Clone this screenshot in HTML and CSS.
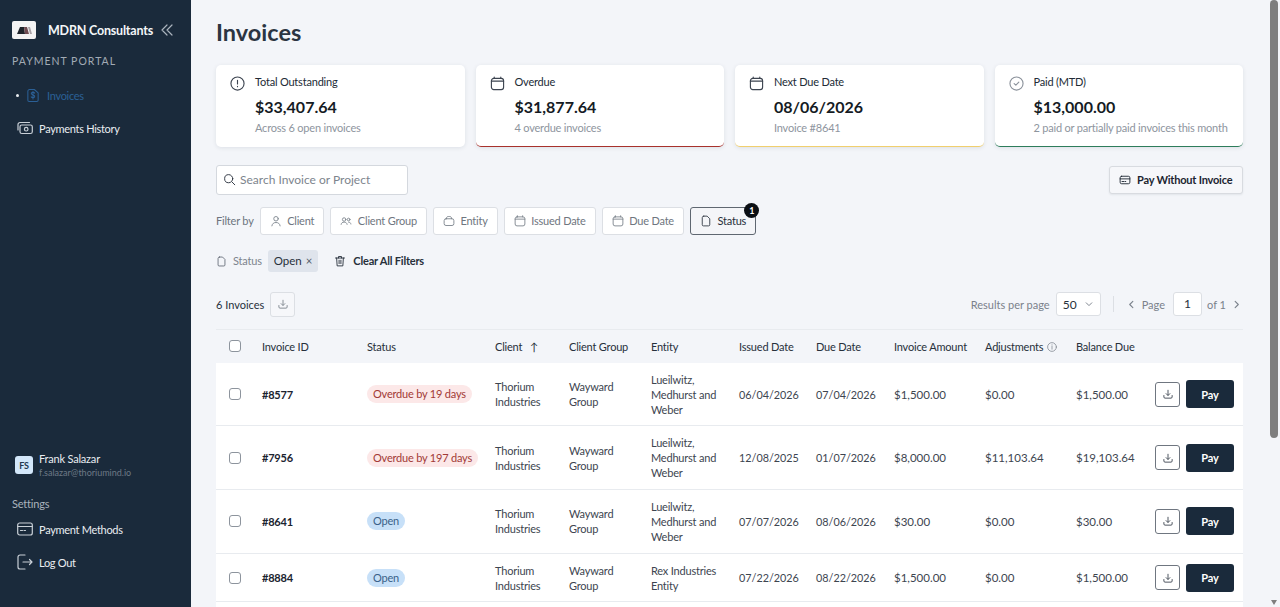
FILE: index.html
```html
<!DOCTYPE html>
<html lang="en">
<head>
  <meta charset="UTF-8">
  <meta name="viewport" content="width=device-width, initial-scale=1.0">
  <title>Invoices - MDRN Consultants</title>
  <link rel="stylesheet" href="styles.css">
</head>
<body>
  <svg class="sprites" aria-hidden="true">
    <symbol id="i-doc" viewBox="0 0 16 16"><path d="M5 1.5h4.5L13 5v8a1.5 1.5 0 0 1-1.5 1.5h-7A1.5 1.5 0 0 1 3 13V3.5a2 2 0 0 1 2-2z"/></symbol>
    <symbol id="i-cal" viewBox="0 0 16 16"><rect x="1.5" y="2.5" width="13" height="12" rx="2.5"/><path d="M1.5 5.5h13M4.5 1v1.5M11.5 1v1.5"/></symbol>
    <symbol id="i-download" viewBox="0 0 16 16"><path d="M8 3v6.5M5.5 7.5 8 10l2.5-2.5M2.5 10v2a1.5 1.5 0 0 0 1.5 1.5h8a1.5 1.5 0 0 0 1.5-1.5v-2"/></symbol>
    <symbol id="i-card" viewBox="0 0 16 16"><rect x="1.5" y="3" width="13" height="10" rx="2"/><path d="M1.5 6.5h13M4 10h2.5M8 10h1"/></symbol>
  </svg>

  <div class="app">
    <aside class="sidebar">
      <div class="brand">
        <div class="logo">
          <svg viewBox="0 0 24 18" width="24" height="18"><path d="M5 13 8 6h4l1 7z" fill="#20242b"/><path d="M12 6h3l2 7h-4z" fill="#6f4a50"/><path d="M16 6h2l2 7h-2z" fill="#a9a2a6"/></svg>
        </div>
        <span class="brand-name">MDRN Consultants</span>
        <svg class="collapse" viewBox="0 0 12 12" width="12" height="12"><path d="M6 1 1 6l5 5M11 1 6 6l5 5"/></svg>
      </div>
      <div class="portal">PAYMENT PORTAL</div>
      <nav class="nav">
        <a class="nav-item active">
          <span class="dot"></span>
          <svg class="nav-icon" viewBox="0 0 14 16" width="12" height="15"><path d="M3 1h5.5L13 5v8.5a1.5 1.5 0 0 1-1.5 1.5h-9A1.5 1.5 0 0 1 1 13.500V3a2 2 0 0 1 2-2z"/><path d="M9 5.200C8.600 4.600 8 4.300 7 4.300c-1.200 0-2 .6-2 1.500 0 2 4 1.100 4 3.200 0 .9-.8 1.600-2 1.600-1 0-1.700-.4-2.100-1M7 3.200v9"/></svg>
          <span>Invoices</span>
        </a>
        <a class="nav-item">
          <svg class="nav-icon" viewBox="0 0 16 14" width="16" height="14"><rect x="3" y="4" width="12.300" height="8.500" rx="1.800"/><circle cx="9.200" cy="8.200" r="1.800"/><path d="M1 9V3.500A2 2 0 0 1 3 1.500h9.500"/></svg>
          <span>Payments History</span>
        </a>
      </nav>
      <div class="side-bottom">
        <div class="user">
          <div class="avatar">FS</div>
          <div>
            <div class="user-name">Frank Salazar</div>
            <div class="user-mail">f.salazar@thoriumind.io</div>
          </div>
        </div>
        <div class="settings">Settings</div>
        <a class="nav-item">
          <svg class="nav-icon" viewBox="0 0 16 14" width="16" height="14"><rect x=".7" y="1" width="14.600" height="12" rx="2"/><path d="M.7 4.500h14.600M3.500 8.500h2M7 8.500h1.500"/></svg>
          <span>Payment Methods</span>
        </a>
        <a class="nav-item">
          <svg class="nav-icon" viewBox="0 0 16 16" width="16" height="16"><path d="M8 1H3a2 2 0 0 0-2 2v10a2 2 0 0 0 2 2h5M6 8h9M12.500 5.500 15 8l-2.500 2.500"/></svg>
          <span>Log Out</span>
        </a>
      </div>
    </aside>

    <main class="main">
      <h1>Invoices</h1>

      <section class="cards">
        <div class="card">
          <svg class="card-icon" viewBox="0 0 16 16"><circle cx="8" cy="8" r="7"/><path d="M8 4.500v4M8 11v.5"/></svg>
          <div>
            <div class="card-title">Total Outstanding</div>
            <div class="card-value">$33,407.64</div>
            <div class="card-sub">Across 6 open invoices</div>
          </div>
        </div>
        <div class="card card-red">
          <svg class="card-icon"><use href="#i-cal"/></svg>
          <div>
            <div class="card-title">Overdue</div>
            <div class="card-value">$31,877.64</div>
            <div class="card-sub">4 overdue invoices</div>
          </div>
        </div>
        <div class="card card-yellow">
          <svg class="card-icon"><use href="#i-cal"/></svg>
          <div>
            <div class="card-title">Next Due Date</div>
            <div class="card-value">08/06/2026</div>
            <div class="card-sub">Invoice #8641</div>
          </div>
        </div>
        <div class="card card-green">
          <svg class="card-icon light" viewBox="0 0 16 16"><circle cx="8" cy="8" r="7"/><path d="m5.500 8.200 1.800 1.600 3.200-3.300"/></svg>
          <div>
            <div class="card-title">Paid (MTD)</div>
            <div class="card-value">$13,000.00</div>
            <div class="card-sub">2 paid or partially paid invoices this month</div>
          </div>
        </div>
      </section>

      <div class="search-row">
        <label class="search">
          <svg viewBox="0 0 16 16" width="13" height="13"><circle cx="7" cy="7" r="5"/><path d="m11 11 3.500 3.500"/></svg>
          <span>Search Invoice or Project</span>
        </label>
        <button class="btn-outline">
          <svg viewBox="0 0 16 16" width="12" height="12"><use href="#i-card"/></svg>
          Pay Without Invoice
        </button>
      </div>

      <div class="filter-row">
        <span class="filter-label">Filter by</span>
        <button class="chip"><svg viewBox="0 0 16 16"><circle cx="8" cy="5" r="3"/><path d="M2.500 14.500c.5-3 2.500-4.500 5.500-4.500s5 1.500 5.500 4.500"/></svg>Client</button>
        <button class="chip"><svg viewBox="0 0 16 16"><circle cx="5.500" cy="6" r="2.300"/><circle cx="11.500" cy="6" r="1.800"/><path d="M1.500 12.500c.3-2 1.800-3 4-3s3.700 1 4 3M11.500 9.500c1.700 0 2.800.9 3 2.500"/></svg>Client Group</button>
        <button class="chip"><svg viewBox="0 0 16 16"><rect x="1.500" y="5" width="13" height="9" rx="2.500"/><path d="M4.500 5c0-1.800.8-3 2.500-3h2c1.700 0 2.500 1.200 2.500 3"/></svg>Entity</button>
        <button class="chip"><svg><use href="#i-cal"/></svg>Issued Date</button>
        <button class="chip"><svg><use href="#i-cal"/></svg>Due Date</button>
        <button class="chip chip-on"><svg class="dark"><use href="#i-doc"/></svg>Status<span class="badge">1</span></button>
      </div>

      <div class="applied-row">
        <svg class="applied-icon"><use href="#i-doc"/></svg>
        <span class="applied-label">Status</span>
        <span class="tag">Open <span class="tag-x">×</span></span>
        <button class="clear">
          <svg viewBox="0 0 16 16" width="12" height="12"><path d="M2 4h12M6 4V2h4v2M3.500 4l.7 10.500h7.600L12.500 4M6.800 7v4.500M9.200 7v4.500"/></svg>
          Clear All Filters
        </button>
      </div>

      <div class="list-bar">
        <span class="count">6 Invoices</span>
        <button class="icon-btn faint"><svg><use href="#i-download"/></svg></button>
        <div class="pager">
          <span>Results per page</span>
          <span class="select">50 <svg viewBox="0 0 10 10" width="8" height="8"><path d="m1.500 3.500 3.500 3.500 3.500-3.500"/></svg></span>
          <span class="pager-sep"></span>
          <svg class="pager-arrow" viewBox="0 0 10 10" width="9" height="9"><path d="M6.500 1.500 3 5l3.500 3.500"/></svg>
          <span>Page</span>
          <span class="page-box">1</span>
          <span>of 1</span>
          <svg class="pager-arrow" viewBox="0 0 10 10" width="9" height="9"><path d="M3.500 1.500 7 5 3.500 8.500"/></svg>
        </div>
      </div>

      <table class="invoices">
        <colgroup>
          <col class="c-check"><col class="c-id"><col class="c-status"><col class="c-client"><col class="c-group"><col class="c-entity"><col class="c-issued"><col class="c-due"><col class="c-amount"><col class="c-adj"><col class="c-bal"><col class="c-act">
        </colgroup>
        <thead>
          <tr>
            <th><span class="check"></span></th>
            <th>Invoice ID</th>
            <th>Status</th>
            <th>Client <span class="sort">↑</span></th>
            <th>Client Group</th>
            <th>Entity</th>
            <th>Issued Date</th>
            <th>Due Date</th>
            <th>Invoice Amount</th>
            <th>Adjustments <svg class="info" viewBox="0 0 16 16" width="10" height="10"><circle cx="8" cy="8" r="7"/><path d="M8 7v4.500M8 4.500V5"/></svg></th>
            <th>Balance Due</th>
            <th></th>
          </tr>
        </thead>
        <tbody>
          <tr>
            <td><span class="check"></span></td>
            <td class="inv-id">#8577</td>
            <td><span class="pill pill-red">Overdue by 19 days</span></td>
            <td>Thorium Industries</td>
            <td>Wayward Group</td>
            <td>Lueilwitz, Medhurst and Weber</td>
            <td class="date">06/04/2026</td>
            <td class="date">07/04/2026</td>
            <td class="money">$1,500.00</td>
            <td class="money">$0.00</td>
            <td class="money">$1,500.00</td>
            <td><div class="actions"><button class="icon-btn"><svg><use href="#i-download"/></svg></button><button class="pay">Pay</button></div></td>
          </tr>
          <tr>
            <td><span class="check"></span></td>
            <td class="inv-id">#7956</td>
            <td><span class="pill pill-red">Overdue by 197 days</span></td>
            <td>Thorium Industries</td>
            <td>Wayward Group</td>
            <td>Lueilwitz, Medhurst and Weber</td>
            <td class="date">12/08/2025</td>
            <td class="date">01/07/2026</td>
            <td class="money">$8,000.00</td>
            <td class="money">$11,103.64</td>
            <td class="money">$19,103.64</td>
            <td><div class="actions"><button class="icon-btn"><svg><use href="#i-download"/></svg></button><button class="pay">Pay</button></div></td>
          </tr>
          <tr>
            <td><span class="check"></span></td>
            <td class="inv-id">#8641</td>
            <td><span class="pill pill-blue">Open</span></td>
            <td>Thorium Industries</td>
            <td>Wayward Group</td>
            <td>Lueilwitz, Medhurst and Weber</td>
            <td class="date">07/07/2026</td>
            <td class="date">08/06/2026</td>
            <td class="money">$30.00</td>
            <td class="money">$0.00</td>
            <td class="money">$30.00</td>
            <td><div class="actions"><button class="icon-btn"><svg><use href="#i-download"/></svg></button><button class="pay">Pay</button></div></td>
          </tr>
          <tr>
            <td><span class="check"></span></td>
            <td class="inv-id">#8884</td>
            <td><span class="pill pill-blue">Open</span></td>
            <td>Thorium Industries</td>
            <td>Wayward Group</td>
            <td>Rex Industries Entity</td>
            <td class="date">07/22/2026</td>
            <td class="date">08/22/2026</td>
            <td class="money">$1,500.00</td>
            <td class="money">$0.00</td>
            <td class="money">$1,500.00</td>
            <td><div class="actions"><button class="icon-btn"><svg><use href="#i-download"/></svg></button><button class="pay">Pay</button></div></td>
          </tr>
          <tr>
            <td colspan="12" class="next-row"></td>
          </tr>
        </tbody>
      </table>
    </main>

    <div class="scrollbar">
      <span class="scroll-thumb"></span>
      <span class="scroll-down"></span>
    </div>
  </div>
</body>
</html>
```

FILE: styles.css
```css
* {
  box-sizing: border-box;
}

html, body {
  height: 100%;
  margin: 0;
  overflow: hidden;
}

body {
  font-family: "Lato", "Liberation Sans", sans-serif;
  font-size: 11px;
  letter-spacing: -0.2px;
  color: #1b2430;
  background: #f3f5f9;
}

button {
  font: inherit;
  letter-spacing: inherit;
  color: inherit;
  background: none;
  border: none;
  padding: 0;
}

svg {
  fill: none;
  stroke: currentColor;
  stroke-width: 1.2;
  stroke-linecap: round;
  stroke-linejoin: round;
}

.sprites {
  display: none;
}

.app {
  display: flex;
  height: 607px;
}

/* sidebar */
.sidebar {
  width: 191px;
  flex: none;
  display: flex;
  flex-direction: column;
  background: #1a2a3b;
  color: #e9edf1;
  padding: 21px 0 0 12px;
}

.brand {
  display: flex;
  align-items: center;
  height: 18px;
}

.logo {
  width: 24px;
  height: 18px;
  background: #f4f3f3;
  border-radius: 2px;
  margin-right: 12px;
}

.logo svg {
  stroke: none;
  display: block;
}

.brand-name {
  font-size: 12.5px;
  font-weight: 700;
  color: #f4f6f8;
}

.collapse {
  margin-left: 8px;
  color: #aab3bd;
}

.portal {
  margin-top: 16px;
  font-size: 10.5px;
  letter-spacing: 1px;
  color: #a2abb5;
}

.nav {
  margin-top: 16px;
  display: flex;
  flex-direction: column;
  gap: 9px;
}

.nav-item {
  display: flex;
  align-items: center;
  gap: 6px;
  height: 24px;
  padding-left: 5px;
  letter-spacing: -0.3px;
  color: #e9edf1;
}

.nav-item.active {
  color: #2b6096;
  gap: 0;
  padding-left: 4px;
}

.dot {
  width: 3px;
  height: 3px;
  background: #e9edf1;
  border-radius: 50%;
  margin-right: 8px;
}

.active .nav-icon {
  margin-right: 8px;
}

.nav-icon {
  flex: none;
  color: #c9d0d7;
}

.active .nav-icon {
  color: #2b6096;
}

.side-bottom {
  margin-top: auto;
  padding-bottom: 33px;
}

.user {
  display: flex;
  align-items: center;
  gap: 6px;
  padding-left: 3px;
}

.avatar {
  width: 18px;
  height: 18px;
  border-radius: 3px;
  background: #d3e7fa;
  color: #24384e;
  font-size: 9px;
  font-weight: 700;
  display: flex;
  align-items: center;
  justify-content: center;
}

.user-name {
  color: #e9edf1;
}

.user-mail {
  margin-top: 2px;
  font-size: 9px;
  letter-spacing: 0;
  color: #6d7986;
}

.settings {
  margin: 19px 0 7px;
  color: #aab3bd;
}

.side-bottom .nav-item + .nav-item {
  margin-top: 9px;
}

/* main */
.main {
  flex: 1;
  min-width: 0;
  overflow: hidden;
  padding: 0 25px;
}

h1 {
  margin: 0;
  padding-top: 18px;
  height: 65px;
  font-size: 23.5px;
  letter-spacing: 0;
  line-height: 28px;
  font-weight: 700;
  color: #2b3542;
}

.cards {
  display: grid;
  grid-template-columns: repeat(4, 1fr);
  gap: 11px;
}

.card {
  display: flex;
  gap: 10px;
  height: 82px;
  padding: 10px 14px;
  background: #fff;
  border-radius: 5px;
  box-shadow: 0 1px 4px rgba(30, 45, 65, 0.1);
}

.card-red {
  border-bottom: 1px solid #a8322c;
}

.card-yellow {
  border-bottom: 1px solid #f0cf6e;
}

.card-green {
  border-bottom: 1px solid #2e7d5b;
}

.card-icon {
  flex: none;
  width: 15px;
  height: 15px;
  margin-top: 1px;
  color: #3c4450;
}

.card-icon.light {
  color: #8b929b;
}

.card-title {
  line-height: 14px;
  color: #222b36;
}

.card-value {
  margin-top: 7px;
  font-size: 16px;
  letter-spacing: 0;
  line-height: 22px;
  font-weight: 700;
  color: #151b24;
}

.card-sub {
  margin-top: 3px;
  line-height: 14px;
  color: #8e959e;
}

.search-row {
  display: flex;
  justify-content: space-between;
  align-items: center;
  margin-top: 18px;
}

.search {
  display: flex;
  align-items: center;
  gap: 4px;
  width: 192px;
  height: 30px;
  padding: 0 0 1px 6px;
  background: #fff;
  border: 1px solid #d4d8de;
  border-radius: 3px;
  font-size: 12px;
  letter-spacing: 0;
  color: #7d848d;
}

.search svg {
  color: #333b46;
}

.btn-outline {
  display: flex;
  align-items: center;
  gap: 6px;
  width: 134px;
  height: 28px;
  padding: 0 0 1px 9px;
  background: #f6f7fa;
  border: 1px solid #d8dbe0;
  border-radius: 3px;
  font-weight: 700;
  box-shadow: 0 1px 2px rgba(30, 45, 65, 0.08);
}

.filter-row {
  display: flex;
  align-items: center;
  gap: 6px;
  margin-top: 12px;
  height: 28px;
}

.filter-label {
  padding-bottom: 1px;
  color: #6c747e;
}

.chip {
  position: relative;
  display: flex;
  align-items: center;
  gap: 5.500px;
  height: 28px;
  padding: 0 9px 1px;
  background: #fff;
  border: 1px solid #dcdfe4;
  border-radius: 3px;
  color: #6f7680;
}

.chip svg {
  width: 12px;
  height: 12px;
  color: #7d848d;
}

.chip svg.dark {
  color: #333b46;
}

.chip-on {
  background: #f4f5f8;
  border-color: #5f6771;
  color: #27303b;
}

.badge {
  position: absolute;
  top: -5px;
  right: -4px;
  width: 15px;
  height: 15px;
  border-radius: 50%;
  background: #0b0f14;
  color: #fff;
  font-size: 9px;
  font-weight: 700;
  line-height: 15px;
  text-align: center;
}

.applied-row {
  display: flex;
  align-items: center;
  height: 22px;
  margin-top: 15px;
}

.applied-icon {
  width: 11px;
  height: 11px;
  color: #5c6470;
  margin-right: 6px;
}

.applied-label {
  padding-bottom: 1px;
  color: #7d848d;
  margin-right: 6px;
}

.tag {
  height: 22px;
  padding: 0 6px;
  line-height: 22px;
  background: #dfe4ec;
  border-radius: 3px;
  font-size: 11.5px;
  letter-spacing: 0;
  color: #27303b;
}

.tag-x {
  color: #555d68;
  margin-left: 1px;
}

.clear {
  display: flex;
  align-items: center;
  gap: 7px;
  margin-left: 16px;
  padding-bottom: 1px;
  font-weight: 700;
  color: #27303b;
}

.list-bar {
  display: flex;
  align-items: center;
  height: 26px;
  margin-top: 19px;
  gap: 6px;
}

.count {
  letter-spacing: 0;
  color: #27303b;
}

.icon-btn {
  display: flex;
  align-items: center;
  justify-content: center;
  width: 25px;
  height: 25px;
  flex: none;
  border: 1px solid #6f7680;
  border-radius: 3px;
  background: #fff;
}

.icon-btn svg {
  width: 12px;
  height: 12px;
}

.icon-btn.faint {
  border-color: #dcdfe4;
  background: #f6f7fa;
  color: #7d848d;
}

.pager {
  margin: 0 2px 0 auto;
  display: flex;
  align-items: center;
  gap: 6px;
  letter-spacing: 0;
  color: #7a818b;
}

.select {
  display: flex;
  align-items: center;
  justify-content: space-between;
  width: 45px;
  height: 24px;
  padding: 0 7px 0 6px;
  background: #fff;
  border: 1px solid #dcdfe4;
  border-radius: 3px;
  color: #27303b;
  font-size: 12px;
}

.select svg {
  color: #7a818b;
}

.pager-sep {
  width: 1px;
  height: 16px;
  background: #dcdfe4;
  margin: 0 7px 0 6px;
}

.page-box {
  width: 29px;
  height: 24px;
  margin: 0 -1px 0 2px;
  background: #fff;
  border: 1px solid #dcdfe4;
  border-radius: 3px;
  text-align: center;
  line-height: 22px;
  color: #27303b;
  font-size: 12px;
}

/* table */
.invoices {
  width: 100%;
  table-layout: fixed;
  border-collapse: collapse;
  margin-top: 12px;
  border-top: 1px solid #e8ebef;
}

.c-check { width: 46px; }
.c-id { width: 105px; }
.c-status { width: 128px; }
.c-client { width: 74px; }
.c-group { width: 82px; }
.c-entity { width: 88px; }
.c-issued { width: 77px; }
.c-due { width: 78px; }
.c-amount { width: 91px; }
.c-adj { width: 91px; }
.c-bal { width: 79px; }
.c-act { width: 88px; }

th {
  height: 33px;
  padding: 0;
  font-weight: 400;
  text-align: left;
  white-space: nowrap;
  color: #27303b;
}

td {
  padding: 9px 6px 8.700px 0;
  background: #fff;
  border-bottom: 1px solid #e8ebef;
  line-height: 15px;
  color: #3d4550;
}

td.date {
  font-size: 10.800px;
  letter-spacing: 0;
}

td.money {
  font-size: 11.500px;
  letter-spacing: 0;
}

td.next-row {
  height: 20px;
  border-bottom: none;
}

.check {
  display: block;
  width: 12px;
  height: 12px;
  margin-left: 13px;
  background: #fff;
  border: 1px solid #8d949d;
  border-radius: 3px;
}

.sort {
  margin-left: 5px;
}

.info {
  margin-left: 1px;
  color: #7d848d;
  vertical-align: -1px;
}

.inv-id {
  font-weight: 700;
  color: #1b2430;
}

.pill {
  display: inline-block;
  height: 18px;
  padding: 0 6px;
  line-height: 18px;
  border-radius: 9px;
  white-space: nowrap;
}

.pill-red {
  background: #fce8e8;
  color: #a23a36;
}

.pill-blue {
  background: #c7e0f8;
  color: #3a6188;
}

.actions {
  display: flex;
  align-items: center;
  gap: 6px;
}

.pay {
  width: 48px;
  height: 28px;
  background: #1a2a3b;
  border-radius: 3px;
  color: #fff;
  font-weight: 700;
}

/* scrollbar */
.scrollbar {
  position: relative;
  width: 12px;
  flex: none;
  background: #f3f5f9;
}

.scroll-thumb {
  display: block;
  width: 8px;
  height: 438px;
  margin: 0 auto;
  background: #7e7e7e;
  border-radius: 4px;
}

.scroll-down {
  position: absolute;
  left: 3px;
  bottom: 2px;
  border-left: 3px solid transparent;
  border-right: 3px solid transparent;
  border-top: 5px solid #7e7e7e;
}
```
